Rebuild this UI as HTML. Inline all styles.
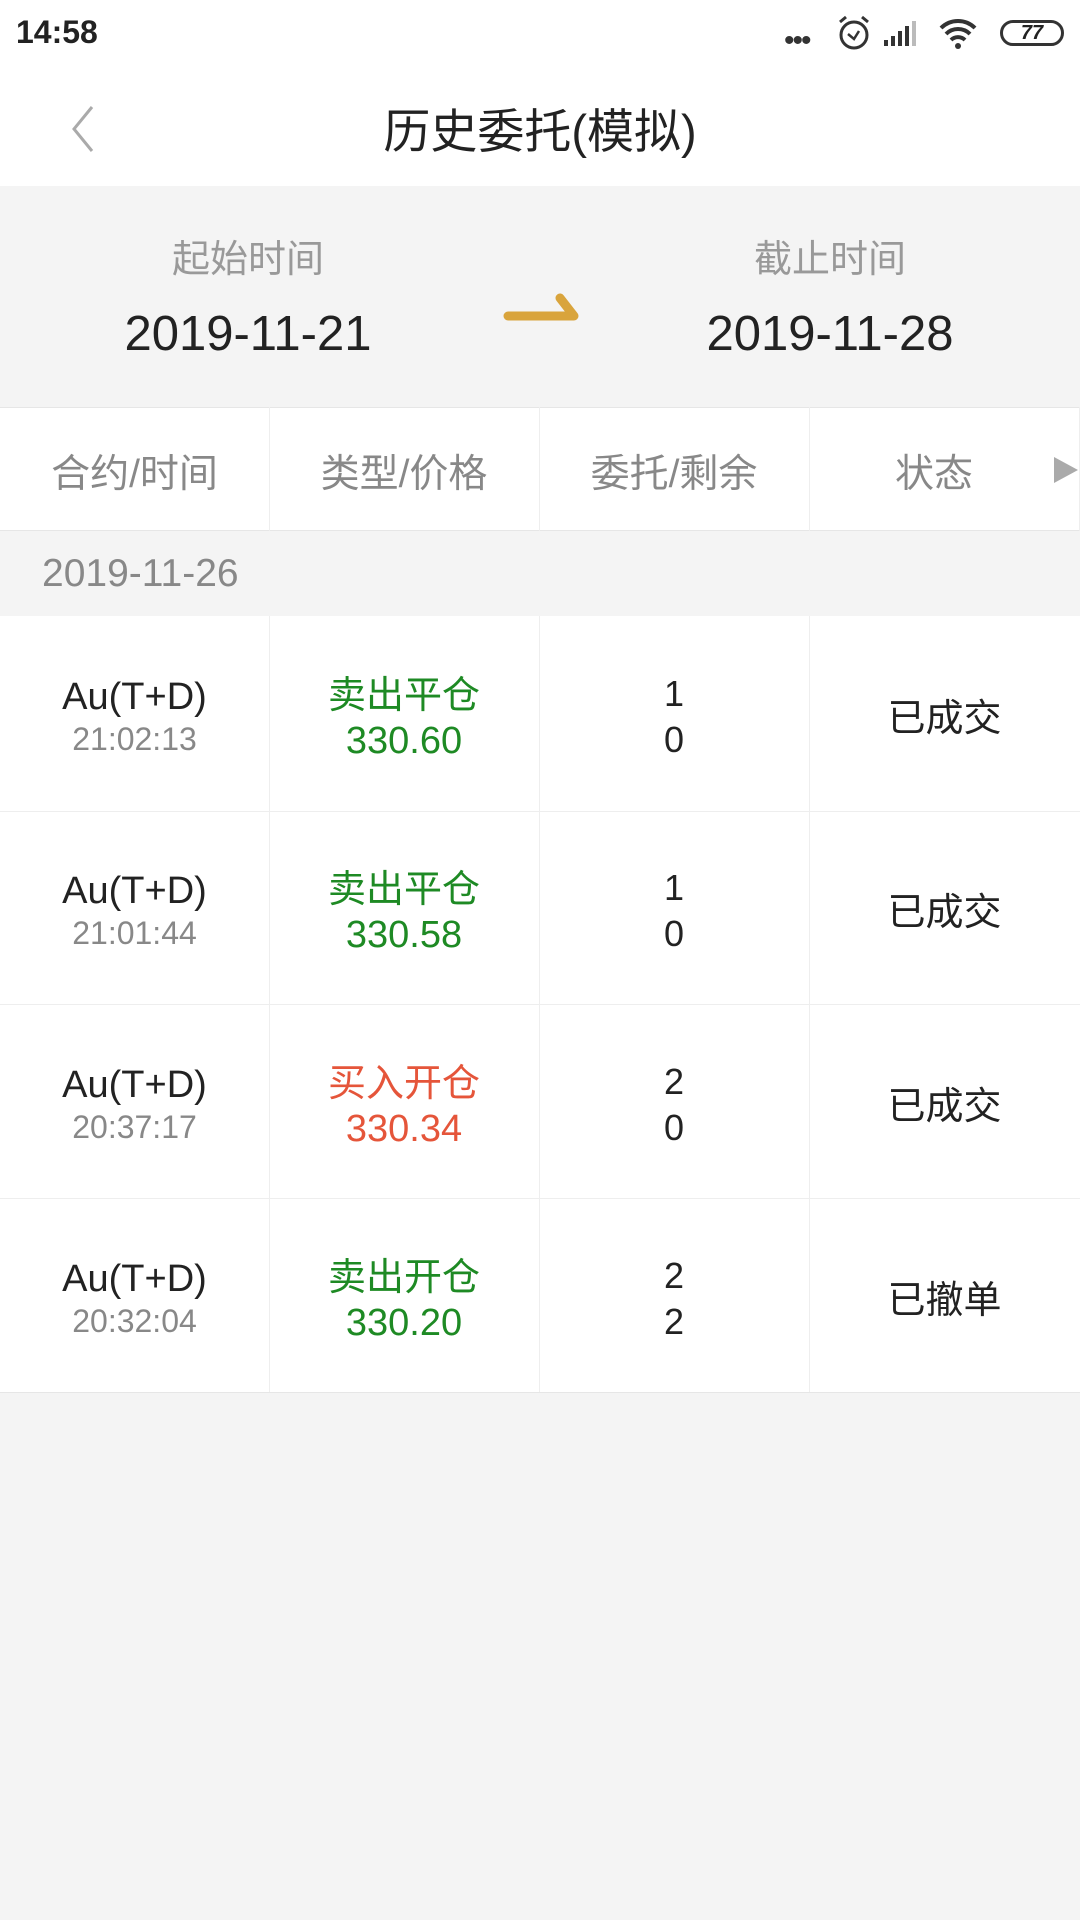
<!DOCTYPE html>
<html><head><meta charset="utf-8"><style>
*{margin:0;padding:0;box-sizing:border-box}
body{width:1080px;height:1920px;background:#f4f4f4;font-family:"Liberation Sans","Noto Sans CJK SC",sans-serif;position:relative;overflow:hidden;color:#222}
.abs{position:absolute}
.c{position:absolute;text-align:center;white-space:nowrap}
</style></head><body>
<div class="abs" style="left:0;top:0;width:1080px;height:186px;background:#fff"></div>
<div class="abs" style="left:16px;top:14px;font-size:32px;font-weight:bold;color:#222">14:58</div>
<div class="abs" style="left:784px;top:24px;font-size:30px;color:#333;letter-spacing:-2px">•••</div>
<svg class="abs" style="left:836px;top:14px" width="36" height="38" viewBox="0 0 36 38"><circle cx="18" cy="21" r="13" fill="none" stroke="#333" stroke-width="3"/><path d="M12 20l6 5 5-8" fill="none" stroke="#333" stroke-width="2.5"/><path d="M4 8l6-5M32 8l-6-5" stroke="#333" stroke-width="3"/></svg>
<svg class="abs" style="left:882px;top:20px" width="40" height="28"><rect x="2" y="20" width="4" height="6" fill="#333"/><rect x="9" y="16" width="4" height="10" fill="#333"/><rect x="16" y="11" width="4" height="15" fill="#333"/><rect x="23" y="6" width="4" height="20" fill="#333"/><rect x="30" y="1" width="4" height="25" fill="#bbb"/></svg>
<svg class="abs" style="left:938px;top:16px" width="40" height="34" viewBox="0 0 40 34"><path d="M3 12a24 24 0 0 1 34 0M8 18a17 17 0 0 1 24 0M13 24a10 10 0 0 1 14 0" fill="none" stroke="#333" stroke-width="4"/><circle cx="20" cy="30" r="3" fill="#333"/></svg>
<div class="abs" style="left:1000px;top:20px;width:64px;height:26px;border:3px solid #333;border-radius:13px;font-size:20px;font-weight:bold;text-align:center;line-height:20px;font-style:italic">77</div>
<svg class="abs" style="left:66px;top:104px" width="30" height="50"><path d="M26 3L8 25l18 22" fill="none" stroke="#aaa" stroke-width="3"/></svg>
<div class="c" style="left:0;width:1080px;top:93px;font-size:47px;color:#222">历史委托(模拟)</div>
<div class="c" style="left:98px;width:300px;top:228px;font-size:38px;color:#999">起始时间</div>
<div class="c" style="left:680px;width:300px;top:228px;font-size:38px;color:#999">截止时间</div>
<div class="c" style="left:98px;width:300px;top:306px;font-size:49px;color:#222">2019-11-21</div>
<div class="c" style="left:680px;width:300px;top:306px;font-size:49px;color:#222">2019-11-28</div>
<svg class="abs" style="left:500px;top:288px" width="84" height="40"><path d="M8 28h66l-14-18" fill="none" stroke="#d9a43c" stroke-width="9" stroke-linecap="round" stroke-linejoin="round"/></svg>
<div class="abs" style="left:0;top:407px;width:1080px;height:124px;background:#fff;border-top:1px solid #e6e6e6;border-bottom:1px solid #e6e6e6"></div>
<div class="abs" style="left:0;top:531px;width:1080px;height:85px;background:#f4f4f4"></div>
<div class="abs" style="left:42px;top:552px;font-size:39px;color:#888">2019-11-26</div>
<div class="abs" style="left:0;top:616px;width:1080px;height:776px;background:#fff"></div>
<div class="abs" style="left:269px;top:407px;width:1px;height:124px;background:#eee"></div>
<div class="abs" style="left:539px;top:407px;width:1px;height:124px;background:#eee"></div>
<div class="abs" style="left:809px;top:407px;width:1px;height:124px;background:#eee"></div>
<div class="abs" style="left:1079px;top:407px;width:1px;height:124px;background:#eee"></div>
<div class="abs" style="left:269px;top:616px;width:1px;height:776px;background:#eee"></div>
<div class="abs" style="left:539px;top:616px;width:1px;height:776px;background:#eee"></div>
<div class="abs" style="left:809px;top:616px;width:1px;height:776px;background:#eee"></div>
<div class="abs" style="left:0;top:811px;width:1080px;height:1px;background:#eee"></div>
<div class="abs" style="left:0;top:1004px;width:1080px;height:1px;background:#eee"></div>
<div class="abs" style="left:0;top:1198px;width:1080px;height:1px;background:#eee"></div>
<div class="abs" style="left:0;top:1392px;width:1080px;height:1px;background:#e6e6e6"></div>
<div class="c" style="left:0;width:269px;top:443px;font-size:39px;color:#888">合约/时间</div>
<div class="c" style="left:269px;width:270px;top:443px;font-size:39px;color:#888">类型/价格</div>
<div class="c" style="left:539px;width:270px;top:443px;font-size:39px;color:#888">委托/剩余</div>
<div class="c" style="left:809px;width:250px;top:443px;font-size:39px;color:#888">状态</div>
<svg class="abs" style="left:1052px;top:455px" width="28" height="30"><path d="M2 2l24 13-24 13z" fill="#aaa"/></svg>

<div style="position:absolute;left:0;top:616px">
<div class="c" style="left:0;width:269px;top:60px;font-size:38px">Au(T+D)</div>
<div class="c" style="left:0;width:269px;top:105px;font-size:32px;color:#888">21:02:13</div>
<div class="c" style="left:269px;width:270px;top:58px;font-size:38px;line-height:45px;color:#1e8a24">卖出平仓<br>330.60</div>
<div class="c" style="left:539px;width:270px;top:55px;font-size:36px;line-height:46px">1<br>0</div>
<div class="c" style="left:809px;width:271px;top:71px;font-size:38px">已成交</div>
</div>
<div style="position:absolute;left:0;top:810px">
<div class="c" style="left:0;width:269px;top:60px;font-size:38px">Au(T+D)</div>
<div class="c" style="left:0;width:269px;top:105px;font-size:32px;color:#888">21:01:44</div>
<div class="c" style="left:269px;width:270px;top:58px;font-size:38px;line-height:45px;color:#1e8a24">卖出平仓<br>330.58</div>
<div class="c" style="left:539px;width:270px;top:55px;font-size:36px;line-height:46px">1<br>0</div>
<div class="c" style="left:809px;width:271px;top:71px;font-size:38px">已成交</div>
</div>
<div style="position:absolute;left:0;top:1004px">
<div class="c" style="left:0;width:269px;top:60px;font-size:38px">Au(T+D)</div>
<div class="c" style="left:0;width:269px;top:105px;font-size:32px;color:#888">20:37:17</div>
<div class="c" style="left:269px;width:270px;top:58px;font-size:38px;line-height:45px;color:#e5553a">买入开仓<br>330.34</div>
<div class="c" style="left:539px;width:270px;top:55px;font-size:36px;line-height:46px">2<br>0</div>
<div class="c" style="left:809px;width:271px;top:71px;font-size:38px">已成交</div>
</div>
<div style="position:absolute;left:0;top:1198px">
<div class="c" style="left:0;width:269px;top:60px;font-size:38px">Au(T+D)</div>
<div class="c" style="left:0;width:269px;top:105px;font-size:32px;color:#888">20:32:04</div>
<div class="c" style="left:269px;width:270px;top:58px;font-size:38px;line-height:45px;color:#1e8a24">卖出开仓<br>330.20</div>
<div class="c" style="left:539px;width:270px;top:55px;font-size:36px;line-height:46px">2<br>2</div>
<div class="c" style="left:809px;width:271px;top:71px;font-size:38px">已撤单</div>
</div>
</body></html>
